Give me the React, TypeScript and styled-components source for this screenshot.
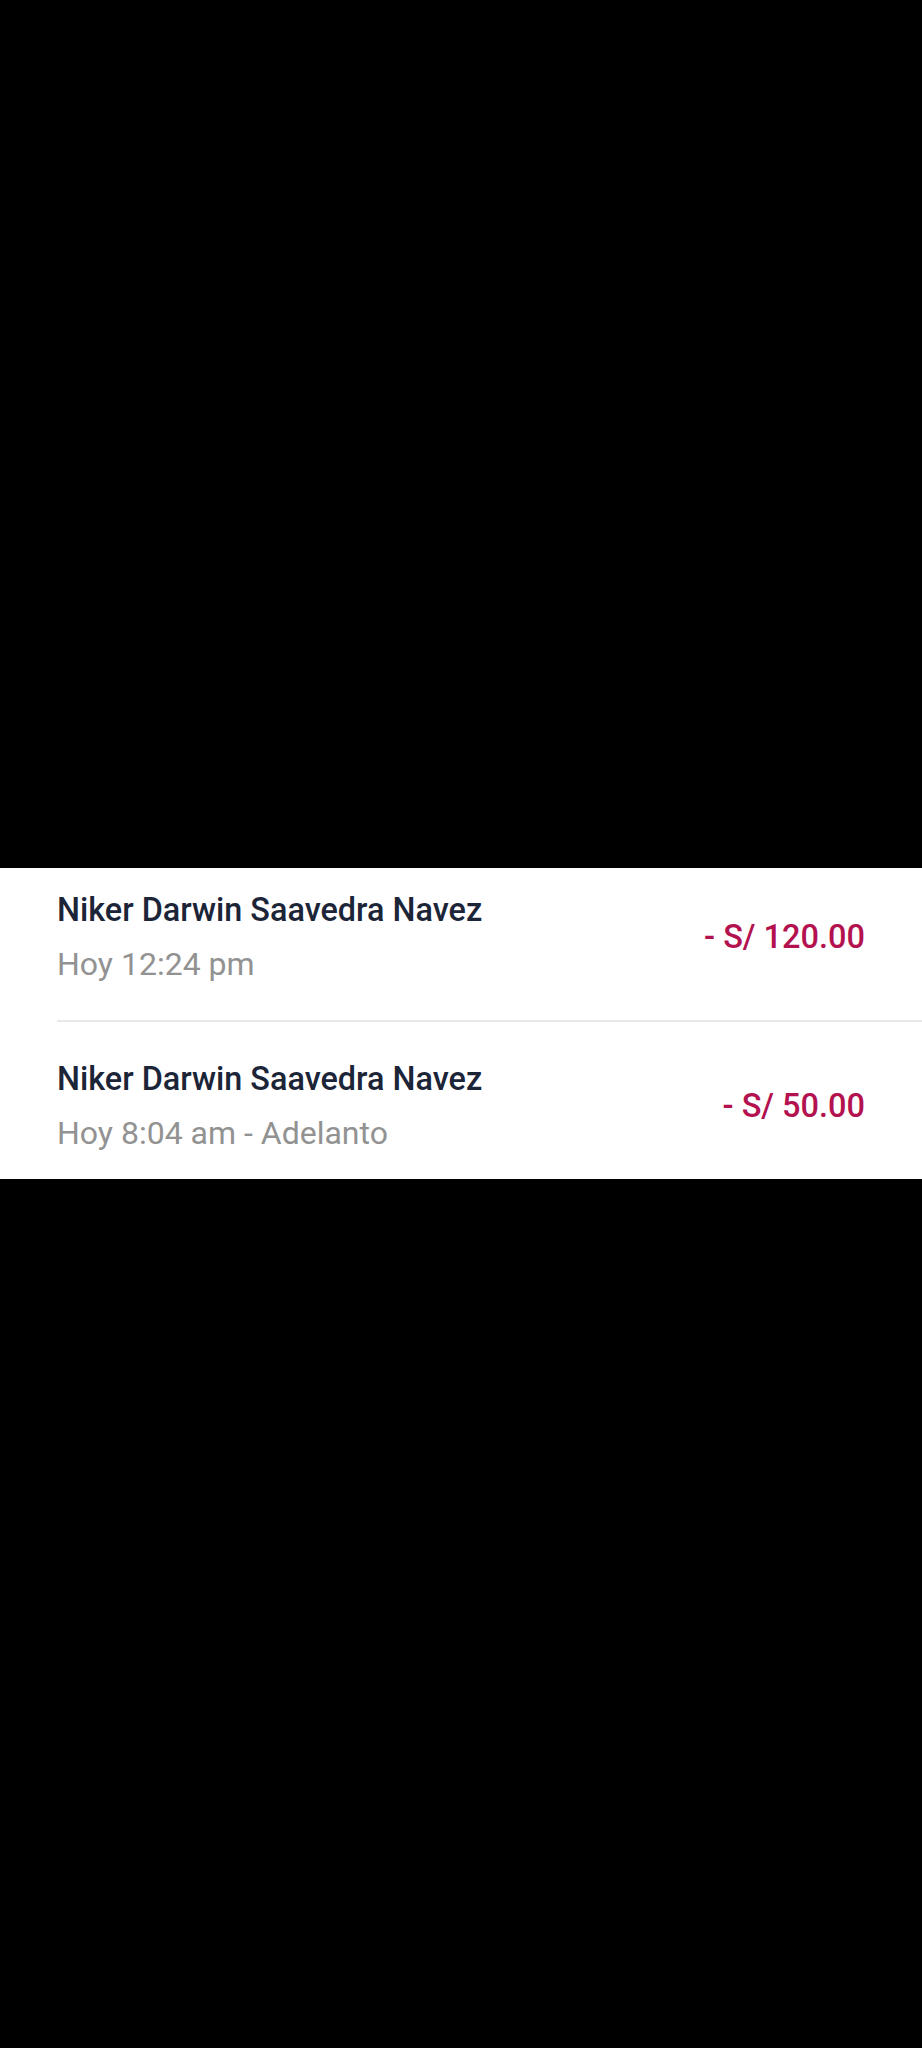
import React from "react";
import styled, { createGlobalStyle } from "styled-components";

const Global = createGlobalStyle`
  html, body { margin: 0; padding: 0; background: #000; }
  body { font-family: Roboto, "Noto Sans", sans-serif; }
`;

const Screen = styled.div`
  width: 922px;
  height: 2048px;
  background: #000;
  padding-top: 868px;
  box-sizing: border-box;
  display: flex;
  flex-direction: column;
`;

const Panel = styled.section`
  background: #fff;
  display: flex;
  flex-direction: column;
`;

const Row = styled.div<{ $top: number; $bottom: number; $divider?: boolean }>`
  margin-left: 57px;
  padding: ${(p) => p.$top}px 57px ${(p) => p.$bottom}px 0;
  display: flex;
  align-items: center;
  justify-content: space-between;
  border-bottom: ${(p) => (p.$divider ? "2px solid #e8e8e8" : "none")};
`;

const Info = styled.div`
  display: flex;
  flex-direction: column;
  gap: 14px;
`;

const Name = styled.div`
  font-size: 32.4px;
  line-height: 40px;
  font-weight: 500;
  color: #1c2538;
`;

const Meta = styled.div`
  font-size: 32px;
  line-height: 40px;
  font-weight: 400;
  color: #929292;
`;

const Amount = styled.div`
  font-size: 32.5px;
  line-height: 40px;
  font-weight: 500;
  color: #b3124f;
`;

const items = [
  { name: "Niker Darwin Saavedra Navez", meta: "Hoy 12:24 pm", amount: "- S/ 120.00", top: 22, bottom: 36, divider: true },
  { name: "Niker Darwin Saavedra Navez", meta: "Hoy 8:04 am - Adelanto", amount: "- S/ 50.00", top: 37, bottom: 26, divider: false },
];

export default function App() {
  return (
    <>
      <Global />
      <Screen>
        <Panel>
          {items.map((it, i) => (
            <Row key={i} $top={it.top} $bottom={it.bottom} $divider={it.divider}>
              <Info>
                <Name>{it.name}</Name>
                <Meta>{it.meta}</Meta>
              </Info>
              <Amount>{it.amount}</Amount>
            </Row>
          ))}
        </Panel>
      </Screen>
    </>
  );
}
